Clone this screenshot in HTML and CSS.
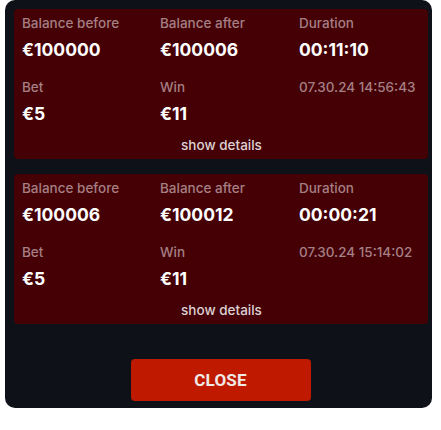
FILE: index.html
```html
<!DOCTYPE html>
<html>
<head>
<meta charset="utf-8">
<link rel="stylesheet" href="styles.css">
</head>
<body>
<div class="panel">
  <div class="list">
    <div class="card">
      <div class="grid">
        <div class="cell"><div class="label">Balance before</div><div class="value">€100000</div></div>
        <div class="cell"><div class="label">Balance after</div><div class="value">€100006</div></div>
        <div class="cell"><div class="label">Duration</div><div class="value">00:11:10</div></div>
        <div class="cell"><div class="label">Bet</div><div class="value">€5</div></div>
        <div class="cell"><div class="label">Win</div><div class="value">€11</div></div>
        <div class="cell"><div class="label">07.30.24 14:56:43</div></div>
      </div>
      <div class="details">show details</div>
    </div>
    <div class="card">
      <div class="grid">
        <div class="cell"><div class="label">Balance before</div><div class="value">€100006</div></div>
        <div class="cell"><div class="label">Balance after</div><div class="value">€100012</div></div>
        <div class="cell"><div class="label">Duration</div><div class="value">00:00:21</div></div>
        <div class="cell"><div class="label">Bet</div><div class="value">€5</div></div>
        <div class="cell"><div class="label">Win</div><div class="value">€11</div></div>
        <div class="cell"><div class="label">07.30.24 15:14:02</div></div>
      </div>
      <div class="details">show details</div>
    </div>
  </div>
  <div class="actions">
    <button class="close">CLOSE</button>
  </div>
</div>
</body>
</html>
```
FILE: styles.css
```css
html, body {
  margin: 0;
  padding: 0;
  background: #ffffff;
}
body {
  font-family: Inter, "Noto Sans", sans-serif;
}
.panel {
  margin-left: 5px;
  width: 427px;
  height: 408px;
  box-sizing: border-box;
  background: #0e1118;
  border-radius: 10px;
  padding: 9px 4px 0 9px;
  display: flex;
  flex-direction: column;
}
.list {
  display: flex;
  flex-direction: column;
  gap: 15px;
}
.card {
  background: #440005;
  border-radius: 4px;
  height: 150px;
  box-sizing: border-box;
  padding: 5px 0 5px 8px;
  display: flex;
  flex-direction: column;
}
.grid {
  display: grid;
  grid-template-columns: 138px 139px 1fr;
  row-gap: 16px;
}
.cell {
  display: flex;
  flex-direction: column;
  gap: 6px;
}
.label {
  font-size: 13.5px;
  line-height: 18px;
  font-weight: 500;
  color: #a57f83;
}
.value {
  font-size: 17.5px;
  line-height: 24px;
  font-weight: 700;
  color: #ffffff;
}
.details {
  margin-top: 10px;
  text-align: center;
  font-size: 13.5px;
  line-height: 18px;
  color: #ddd2d3;
  font-weight: 500;
  padding-right: 7px;
}
.actions {
  display: flex;
  justify-content: center;
  padding-top: 35px;
  padding-right: 1px;
}
.close {
  width: 180px;
  height: 42px;
  border: none;
  border-radius: 4px;
  background: #bf1a00;
  color: #efe9e8;
  font-family: Roboto, "Liberation Sans", sans-serif;
  font-weight: 700;
  font-size: 17px;
  letter-spacing: 0.2px;
}
```
